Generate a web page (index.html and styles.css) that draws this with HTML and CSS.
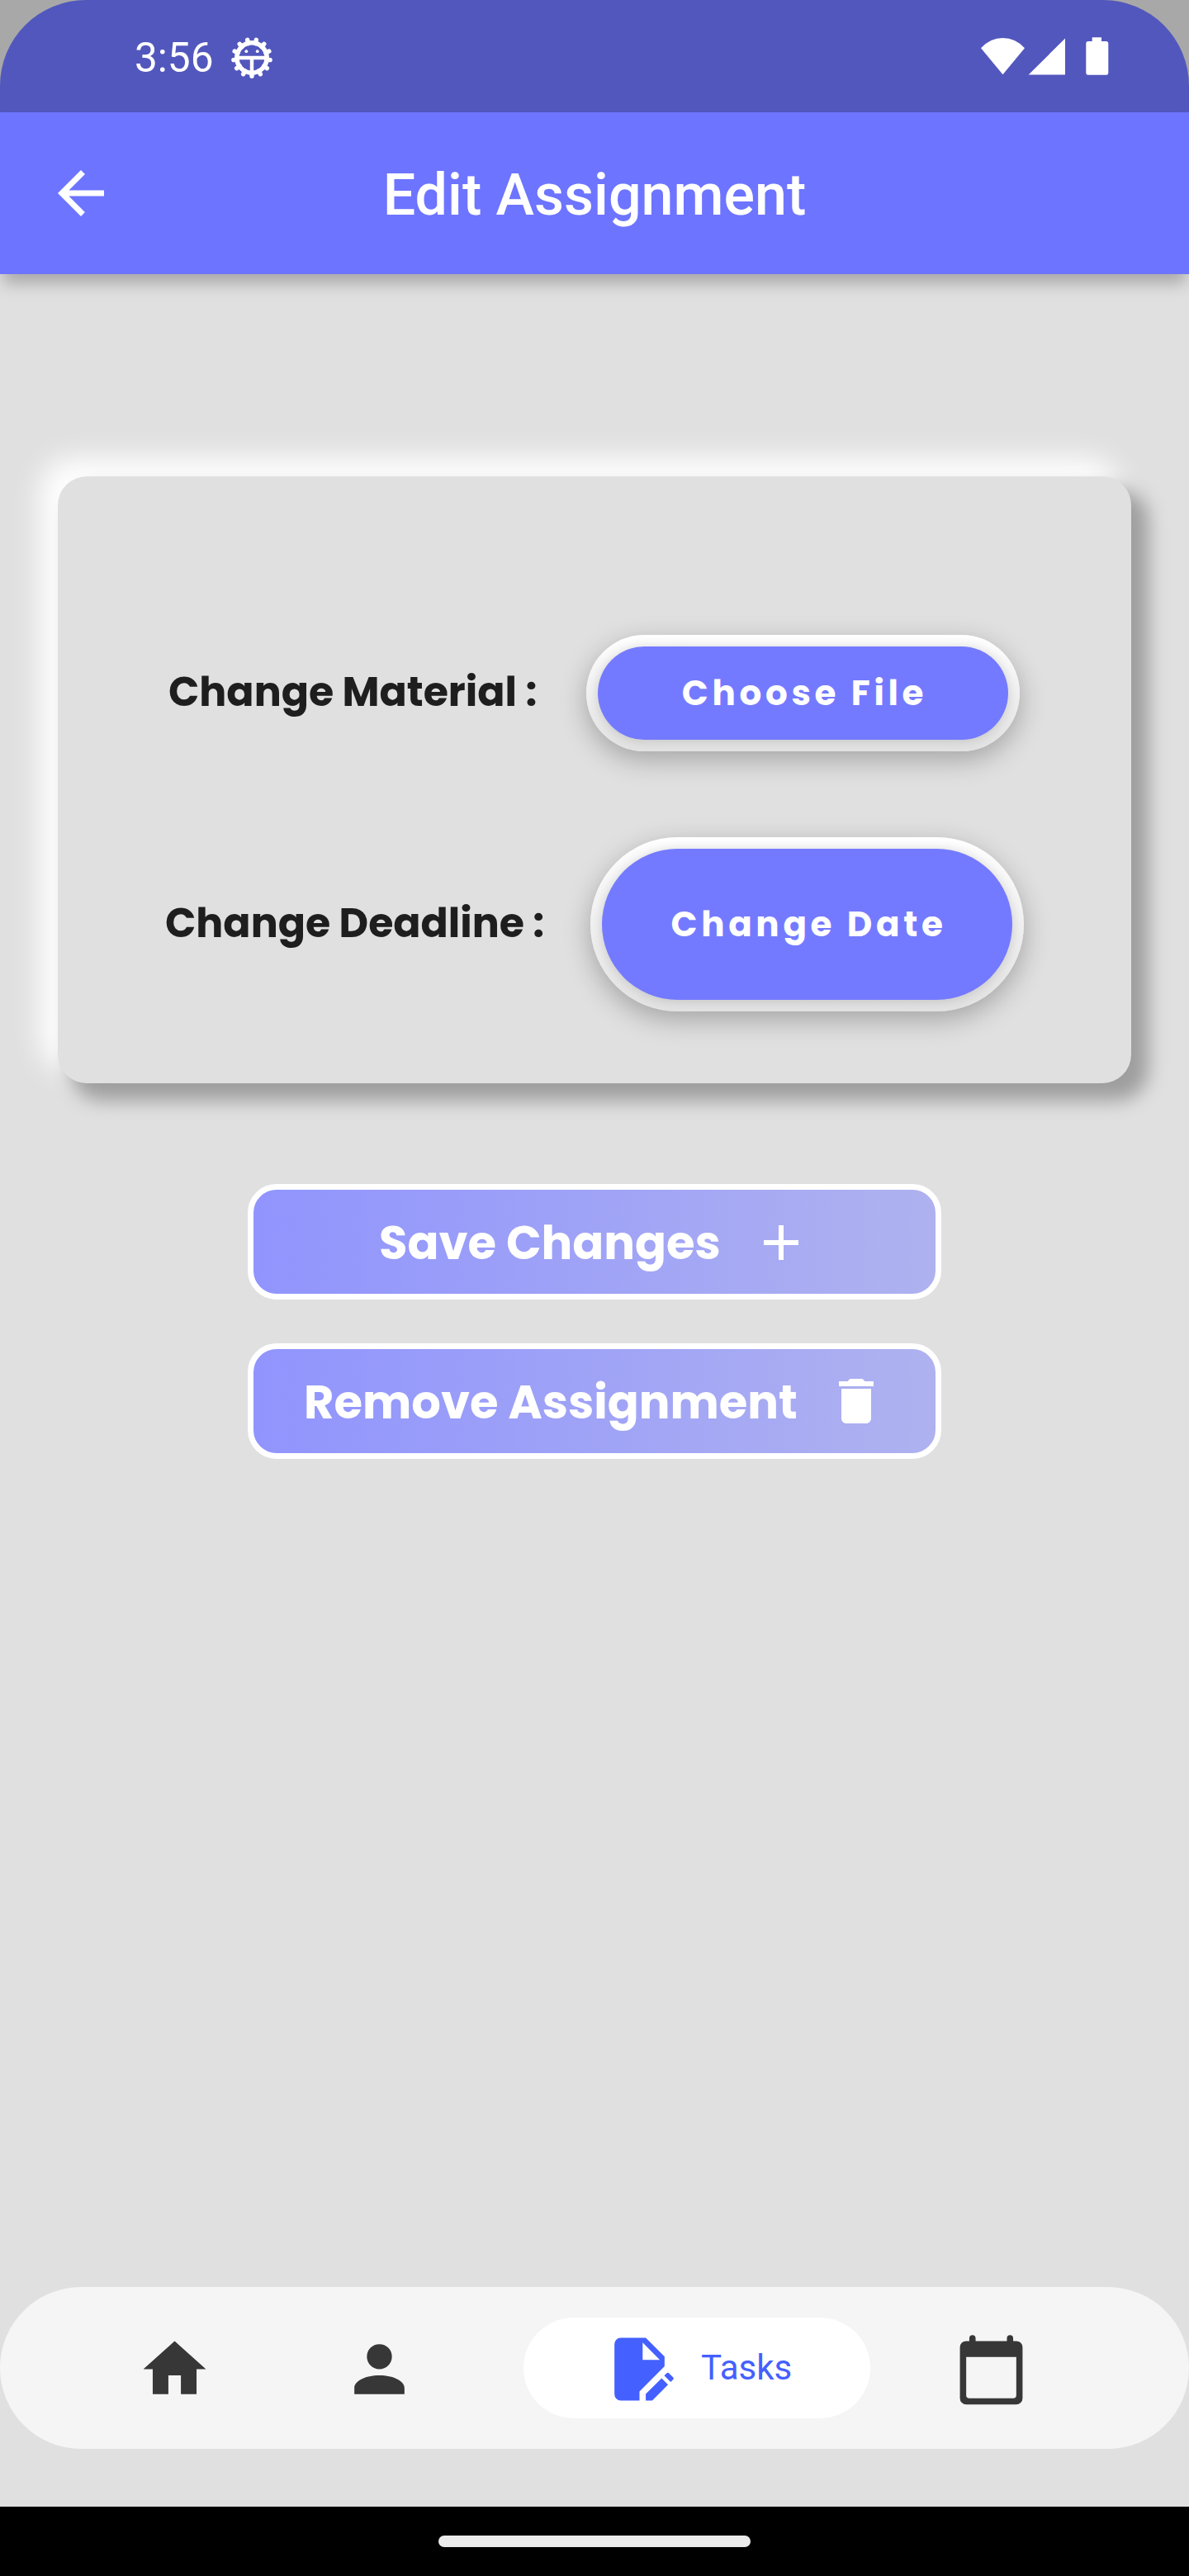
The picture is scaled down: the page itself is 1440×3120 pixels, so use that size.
FILE: index.html
```html
<!DOCTYPE html>
<html lang="en">
<head>
<meta charset="utf-8">
<title>Edit Assignment</title>
<link rel="stylesheet" href="styles.css">
</head>
<body>
<div class="screen">
  <div class="status-wrap">
    <div class="status">
      <div class="status-left">
        <span class="time">3:56</span>
        <svg class="debug-icon" viewBox="-26 -26 52 52" fill="none" stroke="#fff">
          <circle r="18.2" stroke-width="5.6"/>
          <path stroke-width="5.400" stroke-linecap="round" d="M0 22.3V18M10.36 19.75 8.3 15.8M18.35 12.67 14.7 10.1M22.14 2.69 17.7 2.2M20.85-7.91 16.7-6.3M14.79-16.69 11.8-13.4M5.34-21.65 4.3-17.3M-5.34-21.65-4.3-17.3M-14.79-16.69-11.8-13.4M-20.85-7.91-16.7-6.3M-22.14 2.69-17.7 2.2M-18.35 12.67-14.7 10.1M-10.36 19.75-8.3 15.8"/>
          <path stroke-width="4.4" d="M-16 0H16M0 0V16"/>
          <circle cx="-6.7" cy="-7.8" r="1.9" fill="#fff" stroke="none"/>
          <circle cx="6.7" cy="-7.8" r="1.9" fill="#fff" stroke="none"/>
        </svg>
      </div>
      <svg class="status-right" viewBox="0 0 156 48" fill="#fff">
        <path d="M0 14.3Q11 2 26.5 2T53 14.3L26.5 46.3Z"/>
        <path d="M57.7 46.5H102V2.5Z"/>
        <path d="M134.7 1.3H146V6h5.5a2.8 2.8 0 0 1 2.8 2.8V43.9a2.8 2.8 0 0 1-2.8 2.8h-21.400a2.800 2.800 0 0 1-2.800-2.800V8.800a2.800 2.800 0 0 1 2.800-2.800h4.600Z"/>
      </svg>
    </div>
  </div>
  <header class="appbar">
    <svg class="back" viewBox="0 0 24 24" fill="#fff"><path d="M20 11H7.83l5.590-5.590L12 4l-8 8 8 8 1.410-1.410L7.830 13H20z"/></svg>
    <h1 class="title">Edit Assignment</h1>
    <span class="spacer"></span>
  </header>
  <main class="content">
    <section class="card">
      <div class="row row-material">
        <span class="label label-material">Change Material :</span>
        <button class="pill pill-file"><span class="pill-face">Choose File</span></button>
      </div>
      <div class="row row-deadline">
        <span class="label label-deadline">Change Deadline :</span>
        <button class="pill pill-date"><span class="pill-face">Change Date</span></button>
      </div>
    </section>
    <button class="action action-save">
      <span class="action-text">Save Changes</span>
      <svg class="action-icon" viewBox="0 0 24 24" fill="#fff"><path d="M19 13h-6v6h-2v-6H5v-2h6V5h2v6h6z"/></svg>
    </button>
    <button class="action action-remove">
      <span class="action-text">Remove Assignment</span>
      <svg class="action-icon" viewBox="0 0 24 24" fill="#fff"><path d="M6 19c0 1.100.900 2 2 2h8c1.100 0 2-.900 2-2V7H6zM19 4h-3.500l-1-1h-5l-1 1H5v2h14z"/></svg>
    </button>
  </main>
  <nav class="nav">
    <a class="nav-item"><svg class="nav-icon" viewBox="0 0 24 24"><path d="M10 20v-6h4v6h5v-8h3L12 3 2 12h3v8z"/></svg></a>
    <a class="nav-item nav-person"><svg class="nav-icon" viewBox="0 0 24 24"><path d="M12 4A4 4 0 0 1 16 8A4 4 0 0 1 12 12A4 4 0 0 1 8 8A4 4 0 0 1 12 4M12 14C16.420 14 20 15.790 20 18V20H4V18C4 15.790 7.580 14 12 14Z"/></svg></a>
    <a class="nav-item nav-active">
      <svg class="nav-icon" viewBox="0 0 24 24"><path fill-rule="evenodd" d="M6 2A2 2 0 0 0 4 4V20A2 2 0 0 0 6 22H12V19.100L20 11.100V8L14 2ZM13 3.500L18.500 9H13ZM21.040 13.130C20.900 13.130 20.760 13.190 20.650 13.300L19.900 14.050 21.950 16.100 22.700 15.350A.550.550 0 0 0 22.700 14.580L21.420 13.300A.540.540 0 0 0 21.040 13.130M19.070 14.880L14 19.940V22H16.060L21.120 16.930Z"/></svg>
      <span class="nav-text">Tasks</span>
    </a>
    <a class="nav-item nav-calendar"><svg class="nav-icon" viewBox="0 0 24 24"><path fill-rule="evenodd" d="M5 3V2.100a1 1 0 0 1 2 0V3H17V2.100a1 1 0 0 1 2 0V3H20a2 2 0 0 1 2 2V21.300a2 2 0 0 1-2 2H4a2 2 0 0 1-2-2V5A2 2 0 0 1 4 3ZM4 8.100V20.300a1 1 0 0 0 1 1H19a1 1 0 0 0 1-1V8.100Z"/></svg></a>
  </nav>
  <div class="system-bar"><span class="handle"></span></div>
</div>
</body>
</html>
```
FILE: styles.css
```css
* { box-sizing: border-box; }
body { margin: 0; background: #e0e0e0; }
button { border: 0; padding: 0; margin: 0; font: inherit; color: inherit; background: none; }
.screen {
  width: 1440px;
  height: 3120px;
  display: flex;
  flex-direction: column;
  background: #e0e0e0;
  font-family: Roboto, sans-serif;
  overflow: hidden;
}
.status-wrap { height: 136px; background: #a8a8a8; flex: none; }
.status {
  height: 136px;
  background: #5257bd;
  border-radius: 104px 104px 0 0;
  display: flex;
  justify-content: space-between;
  padding: 0 96px 0 163px;
}
.status-left { display: flex; align-items: flex-start; padding-top: 41px; }
.time { color: #fff; font-size: 49.5px; line-height: 58px; width: 116px; white-space: nowrap; }
.debug-icon { width: 52px; height: 52px; margin-top: 3px; }
.status-right { width: 156px; height: 48px; margin-top: 44px; }
.appbar {
  height: 196px;
  flex: none;
  background: #6d74ff;
  box-shadow: 0 15px 18px -4px rgba(0, 0, 0, .25);
  display: flex;
  align-items: center;
  justify-content: space-between;
  padding: 0 56px;
}
.back { width: 84px; height: 84px; }
.spacer { width: 84px; }
.title { margin: 0; color: #fff; font-size: 70px; font-weight: 500; line-height: 82px; padding-top: 3px; }
.content { flex: 1; display: flex; flex-direction: column; align-items: center; padding-top: 245px; }
.card {
  width: 1300px;
  height: 735px;
  flex: none;
  border-radius: 35px;
  background: #e0e0e0;
  box-shadow: 18px 18px 22px 3px #9e9e9e, -18px -18px 35px 4px #fff;
  padding-top: 192px;
}
.row { display: flex; align-items: center; }
.row-material { padding-left: 134px; }
.row-deadline { padding-left: 130px; margin-top: 104px; }
.label, .pill-face, .action-text { font-family: Poppins, Inter, sans-serif; font-weight: 700; white-space: nowrap; }
.label { font-size: 49px; line-height: 70px; padding-bottom: 4px; color: #1e1e1e; }
.label-material { width: 506px; }
.label-deadline { width: 515px; }
.pill {
  width: 525px;
  padding: 14px;
  display: flex;
  background: linear-gradient(#fff, #e2e2e2);
  box-shadow: 0 10px 32px rgba(0, 0, 0, .27);
}
.pill-file { height: 141px; border-radius: 71px; }
.pill-date { height: 211px; border-radius: 106px; }
.pill-face {
  flex: 1;
  align-self: stretch;
  border-radius: inherit;
  background: #747aff;
  box-shadow: 0 1px 14px rgba(0, 0, 0, .16);
  color: #fff;
  font-size: 42px;
  letter-spacing: 4.7px;
  padding-left: 4px;
  display: flex;
  align-items: center;
  justify-content: center;
}
.action {
  width: 840px;
  height: 140px;
  flex: none;
  border: 7px solid #fff;
  border-radius: 35px;
  background: linear-gradient(90deg, #9094fd, #afb2ef);
  background-origin: border-box;
  color: #fff;
  display: flex;
  align-items: center;
}
.action-save { margin-top: 122px; padding-left: 152px; }
.action-remove { margin-top: 53px; padding-left: 61px; }
.action-text { font-size: 56px; line-height: 80px; padding-top: 4px; }
.action-save .action-text { width: 451px; text-align: left; }
.action-remove .action-text { width: 633px; text-align: left; }
.action-icon { width: 72px; height: 72px; flex: none; }
.action-save .action-icon { margin-top: 2px; }
.nav {
  height: 196px;
  flex: none;
  margin-bottom: 70px;
  border-radius: 98px;
  background: #f5f5f5;
  display: flex;
  align-items: center;
  padding-left: 166px;
  color: #373737;
}
.nav-item { display: flex; align-items: center; }
.nav-icon { width: 91px; height: 91px; fill: currentColor; flex: none; margin-top: 3px; }
.nav-person { margin-left: 157px; }
.nav-active {
  margin-left: 129px;
  width: 420px;
  height: 122px;
  border-radius: 61px;
  background: #fff;
  color: #4460ff;
  padding-left: 95px;
}
.nav-text { font-size: 42px; line-height: 50px; margin-left: 29px; }
.nav-calendar { margin-left: 101px; }
.system-bar { height: 84px; flex: none; background: #000; display: flex; align-items: center; justify-content: center; }
.handle { width: 378px; height: 14px; border-radius: 7px; background: #ebebeb; }
```
